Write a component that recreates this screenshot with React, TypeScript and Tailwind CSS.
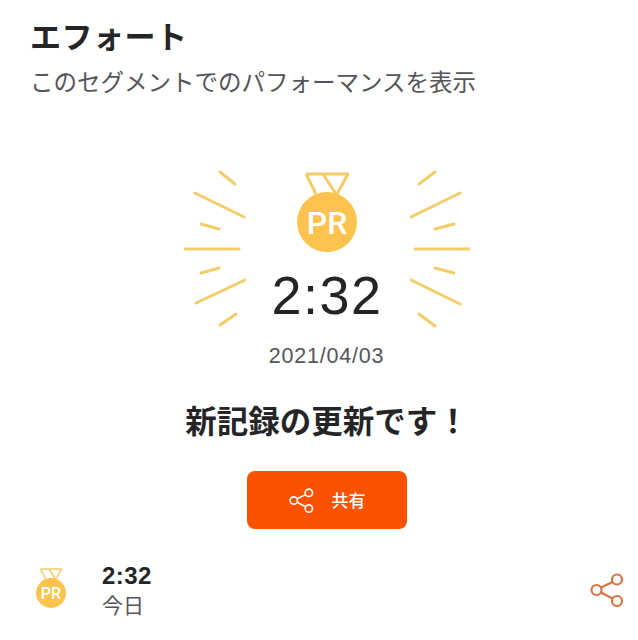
const jp = "font-['Noto_Sans_CJK_JP','Noto_Sans',sans-serif]";
const latin = "font-['Liberation_Sans','Noto_Sans_CJK_JP',sans-serif]";

// ray coordinates are relative to the box of each side, top of box is y=170 in the page
const leftRays = [
  [36, 2, 51, 14],
  [11, 23, 60, 47],
  [17, 54, 35, 59],
  [0, 79, 55, 79],
  [17, 103, 35, 98],
  [12, 133, 61, 110],
  [36, 155, 52, 144],
];

const rightRays = [
  [25, 2, 9, 14],
  [50, 23, 1, 47],
  [44, 54, 25, 59],
  [59, 79, 5, 79],
  [44, 103, 25, 98],
  [50, 134, 1, 110],
  [25, 156, 9, 144],
];

function Rays({ lines, width }: { lines: number[][]; width: number }) {
  return (
    <svg width={width} height={160} viewBox={`0 0 ${width} 160`} fill="none" className="shrink-0">
      {lines.map((l, i) => (
        <line
          key={i}
          x1={l[0]}
          y1={l[1]}
          x2={l[2]}
          y2={l[3]}
          stroke="#f4cd69"
          strokeWidth={3}
          strokeLinecap="round"
        />
      ))}
    </svg>
  );
}

function Medal({ size }: { size: number }) {
  return (
    <svg width={size} height={(size * 80) / 60} viewBox="0 0 60 80" fill="none" className="block">
      <path
        d="M9 2H51L40 22M9 2L19 22M26 2L39 22"
        stroke="#f4cd69"
        strokeWidth={3}
        strokeLinejoin="round"
      />
      <circle cx="30" cy="50" r="30" fill="#fcc44f" />
      <text
        x="30"
        y="61.5"
        textAnchor="middle"
        fontSize="32"
        fontWeight="500"
        fill="#fff"
        fontFamily="Roboto, 'Liberation Sans', sans-serif"
      >
        PR
      </text>
    </svg>
  );
}

function ShareIcon({ className, strokeWidth }: { className: string; strokeWidth: number }) {
  return (
    <svg viewBox="0 0 34 34" fill="none" stroke="currentColor" strokeWidth={strokeWidth} className={className}>
      <circle cx="27" cy="6.5" r="5" />
      <circle cx="6.5" cy="17" r="5" />
      <circle cx="27" cy="28" r="5" />
      <path d="M11 14.5L22.5 9M11 19.5L22.5 25.5" />
    </svg>
  );
}

export default function App() {
  return (
    <div className={`w-[638px] h-[640px] overflow-hidden bg-white ${jp}`}>
      {/* Header */}
      <div className="pl-[30px] pt-[16px]">
        <h1 className="text-[31px] leading-[38px] font-bold tracking-[0.5px] text-[#252528]">エフォート</h1>
        <p className="mt-[11px] text-[23.5px] leading-[32px] text-[#55555a]">このセグメントでのパフォーマンスを表示</p>
      </div>

      {/* PR hero */}
      <div className="pl-[16px]">
        <div className="mt-[73px] flex justify-center">
          <Rays lines={leftRays} width={62} />
          <div className="w-[164px] flex flex-col items-center">
            <div className="mt-[2px] -ml-[2px]">
              <Medal size={60} />
            </div>
            <div className={`mt-[13px] -ml-[2px] text-[54px] leading-[60px] tracking-[1.5px] text-[#252528] ${latin}`}>2:32</div>
          </div>
          <Rays lines={rightRays} width={60} />
        </div>

        <div className={`mt-[14px] -ml-[1px] text-center text-[21.5px] leading-[24px] tracking-[0.8px] text-[#55555a] ${latin}`}>2021/04/03</div>

        <div className="mt-[31px] text-center text-[31.5px] leading-[40px] font-bold text-[#252528]">
          新記録の更新です！
        </div>

        <div className="mt-[32px] flex justify-center">
          <button className="w-[160px] h-[58px] rounded-[8px] bg-[#fc5200] flex items-center justify-center gap-[18px] text-white">
            <ShareIcon className="w-[25px] h-[25px]" strokeWidth={2.2} />
            <span className="text-[17px] font-medium">共有</span>
          </button>
        </div>
      </div>

      {/* Effort row */}
      <div className="mt-[34px] flex items-start pl-[36px] pr-[14px]">
        <div className="mt-[5px] w-[66px]">
          <Medal size={30} />
        </div>
        <div>
          <div className={`text-[24px] leading-[26px] font-bold tracking-[0.4px] text-[#252528] ${latin}`}>2:32</div>
          <div className="text-[21px] leading-[30px] text-[#55555a]">今日</div>
        </div>
        <div className="ml-auto mt-[10px]">
          <ShareIcon className="w-[34px] h-[34px] text-[#d9733f]" strokeWidth={2.2} />
        </div>
      </div>
    </div>
  );
}
